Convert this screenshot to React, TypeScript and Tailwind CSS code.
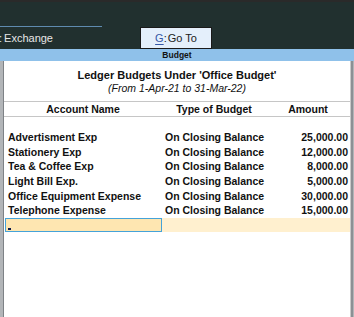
import React from "react";

const rows = [
  ["Advertisment Exp", "On Closing Balance", "25,000.00"],
  ["Stationery Exp", "On Closing Balance", "12,000.00"],
  ["Tea & Coffee Exp", "On Closing Balance", "8,000.00"],
  ["Light Bill Exp.", "On Closing Balance", "5,000.00"],
  ["Office Equipment Expense", "On Closing Balance", "30,000.00"],
  ["Telephone Expense", "On Closing Balance", "15,000.00"],
];

export default function App() {
  return (
    <div
      className="w-[354px] h-[317px] overflow-hidden flex flex-col bg-white"
      style={{ fontFamily: '"Liberation Sans", Arial, sans-serif' }}
    >
      {/* top dark area */}
      <div className="h-[49px] bg-[#21302f] border-t-2 border-[#2a2a2a] flex flex-col">
        <div className="h-[24px]" />
        <div className="w-[102px] h-px bg-[#5f8bb0]" />
        <div className="flex flex-row items-center h-[22px]">
          <div className="w-[140px] flex items-center text-[11px] text-[#e6e6e6] leading-none">
            <span className="-ml-[1px]">:</span>
            <span className="ml-[2px]">Exchange</span>
          </div>
          <div className="w-[72px] h-[22px] bg-[#e4effb] border border-[#1a1a1a] flex items-center justify-center text-[11px] leading-none text-[#222]">
            <span className="text-[#3557a6] underline underline-offset-2">G</span>
            <span>:</span>
            <span className="ml-[1px]">Go To</span>
          </div>
        </div>
      </div>
      {/* blue title bar */}
      <div className="h-[12px] bg-[#8fc1ea] flex items-center justify-center">
        <span className="text-[8.5px] font-bold text-[#111] leading-none">Budget</span>
      </div>
      {/* panel */}
      <div className="flex-1 flex flex-row">
        <div className="w-[3px] bg-[#b2b5b8]" />
        <div className="w-px bg-[#7e8286]" />
        <div className="flex-1 bg-white flex flex-col text-[#111]">
          <div className="pt-[7px] text-center text-[11px] font-bold leading-[14px]">
            Ledger Budgets Under 'Office Budget'
          </div>
          <div className="text-center text-[10.5px] italic leading-[13px]">
            (From 1-Apr-21 to 31-Mar-22)
          </div>
          <div className="mt-[6px] h-px bg-[#c6c6c6]" />
          <div className="flex flex-row h-[14px] items-center text-[10.5px] font-bold leading-none">
            <div className="w-[158px] text-center">Account Name</div>
            <div className="w-[104px] text-center">Type of Budget</div>
            <div className="flex-1 text-center">Amount</div>
          </div>
          <div className="h-px bg-[#c6c6c6]" />
          <div className="h-[13px]" />
          {rows.map((r) => (
            <div
              key={r[0]}
              className="flex flex-row h-[14.67px] items-center text-[10.5px] font-bold leading-none"
            >
              <div className="w-[158px] pl-[4px]">{r[0]}</div>
              <div className="w-[104px] pl-[3px]">{r[1]}</div>
              <div className="flex-1 text-right pr-[2px]">{r[2]}</div>
            </div>
          ))}
          <div className="flex flex-row h-[14px]">
            <div className="w-[158px] pl-px">
              <div className="h-full w-[157px] bg-[#fee6b1] border border-[#45a3d9] relative">
                <div className="absolute left-[2px] bottom-[1px] w-[3px] h-[2px] bg-[#0b1a4c]" />
              </div>
            </div>
            <div className="flex-1 bg-[#fff0cf]" />
          </div>
        </div>
        <div className="w-px bg-[#c9c9c9]" />
        <div className="w-[2px] bg-[#8c9094]" />
        <div className="w-[1px] bg-[#b2b5b8]" />
      </div>
    </div>
  );
}
